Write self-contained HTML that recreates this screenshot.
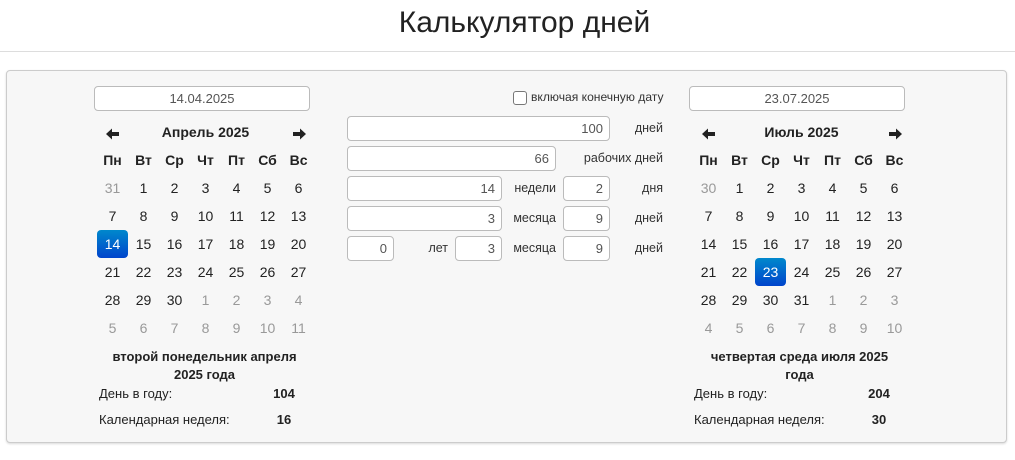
<!DOCTYPE html>
<html><head><meta charset="utf-8"><style>
*{box-sizing:border-box;margin:0;padding:0}
body{width:1015px;height:460px;background:#fff;font-family:"Liberation Sans",Arial,sans-serif;color:#222;position:relative;overflow:hidden;font-size:13px}
h1{position:absolute;top:6px;left:17px;width:1015px;text-align:center;font-weight:normal;font-size:30px;color:#222}
.hr{position:absolute;top:51px;left:0;width:1015px;height:1px;background:#ddd}
.panel{position:absolute;left:6px;top:70px;width:1001px;height:373px;background:#f7f7f7;border:1px solid #ccc;border-radius:4px;box-shadow:0 1px 2px rgba(0,0,0,.15)}
.in{position:absolute;height:25px;background:#fff;border:1px solid #bbb;border-radius:4px;font-size:13px;color:#555;line-height:23px;padding:0 6px;text-align:right}
.c{text-align:center}
.lbl{position:absolute;font-size:12.5px;color:#333;line-height:24px;text-align:right}
table.cal{position:absolute;border-collapse:collapse;top:118px;table-layout:fixed;width:217px}
.cal td{height:28px;text-align:center;font-size:14px;color:#222;padding:0;white-space:nowrap}
.cal th{height:28px;font-size:14px;font-weight:bold;text-align:center;padding:0;white-space:nowrap}
.cal th svg{vertical-align:-3px}
.cal .o{color:#999}
.cal .s{background:linear-gradient(#0088cc,#0044cc);color:#fff;border-radius:4px}
.t{position:absolute;font-size:13px;color:#222}
.b{font-weight:bold}
</style></head><body>
<h1>Калькулятор дней</h1>
<div class="hr"></div>
<div class="panel"></div>

<div class="in c" style="left:94px;top:86px;width:216px">14.04.2025</div>
<div class="in c" style="left:689px;top:86px;width:216px">23.07.2025</div>

<div style="position:absolute;left:513px;top:91px;width:14px;height:14px;border:1px solid #777;border-radius:3px;background:#fff"></div>
<div class="t" style="left:531px;top:90px;color:#333;font-size:12.1px">включая конечную дату</div>

<div class="in" style="left:347px;top:116px;width:263px">100</div><div class="lbl" style="left:600px;top:116px;width:63px">дней</div>
<div class="in" style="left:347px;top:146px;width:209px">66</div><div class="lbl" style="left:560px;top:146px;width:103px">рабочих дней</div>
<div class="in" style="left:347px;top:176px;width:155px">14</div><div class="lbl" style="left:505px;top:176px;width:51px">недели</div>
<div class="in" style="left:563px;top:176px;width:47px">2</div><div class="lbl" style="left:615px;top:176px;width:48px">дня</div>
<div class="in" style="left:347px;top:206px;width:155px">3</div><div class="lbl" style="left:505px;top:206px;width:51px">месяца</div>
<div class="in" style="left:563px;top:206px;width:47px">9</div><div class="lbl" style="left:615px;top:206px;width:48px">дней</div>
<div class="in" style="left:347px;top:236px;width:47px">0</div><div class="lbl" style="left:400px;top:236px;width:48px">лет</div>
<div class="in" style="left:455px;top:236px;width:47px">3</div><div class="lbl" style="left:505px;top:236px;width:51px">месяца</div>
<div class="in" style="left:563px;top:236px;width:47px">9</div><div class="lbl" style="left:615px;top:236px;width:48px">дней</div>

<table class="cal" style="left:97px">
<colgroup><col style="width:31px"><col style="width:31px"><col style="width:31px"><col style="width:31px"><col style="width:31px"><col style="width:31px"><col style="width:31px"></colgroup>
<tr><th><svg width="14" height="12" viewBox="0 0 14 12"><path d="M0 6L6 0.5V4H13V8H6V11.5Z" fill="#222"/></svg></th><th colspan="5">Апрель 2025</th><th><svg width="14" height="12" viewBox="0 0 14 12"><path d="M14 6L8 0.5V4H1V8H8V11.5Z" fill="#222"/></svg></th></tr>
<tr><th>Пн</th><th>Вт</th><th>Ср</th><th>Чт</th><th>Пт</th><th>Сб</th><th>Вс</th></tr>
<tr><td class="o">31</td><td>1</td><td>2</td><td>3</td><td>4</td><td>5</td><td>6</td></tr>
<tr><td>7</td><td>8</td><td>9</td><td>10</td><td>11</td><td>12</td><td>13</td></tr>
<tr><td class="s">14</td><td>15</td><td>16</td><td>17</td><td>18</td><td>19</td><td>20</td></tr>
<tr><td>21</td><td>22</td><td>23</td><td>24</td><td>25</td><td>26</td><td>27</td></tr>
<tr><td>28</td><td>29</td><td>30</td><td class="o">1</td><td class="o">2</td><td class="o">3</td><td class="o">4</td></tr>
<tr><td class="o">5</td><td class="o">6</td><td class="o">7</td><td class="o">8</td><td class="o">9</td><td class="o">10</td><td class="o">11</td></tr>
</table>

<table class="cal" style="left:693px">
<colgroup><col style="width:31px"><col style="width:31px"><col style="width:31px"><col style="width:31px"><col style="width:31px"><col style="width:31px"><col style="width:31px"></colgroup>
<tr><th><svg width="14" height="12" viewBox="0 0 14 12"><path d="M0 6L6 0.5V4H13V8H6V11.5Z" fill="#222"/></svg></th><th colspan="5">Июль 2025</th><th><svg width="14" height="12" viewBox="0 0 14 12"><path d="M14 6L8 0.5V4H1V8H8V11.5Z" fill="#222"/></svg></th></tr>
<tr><th>Пн</th><th>Вт</th><th>Ср</th><th>Чт</th><th>Пт</th><th>Сб</th><th>Вс</th></tr>
<tr><td class="o">30</td><td>1</td><td>2</td><td>3</td><td>4</td><td>5</td><td>6</td></tr>
<tr><td>7</td><td>8</td><td>9</td><td>10</td><td>11</td><td>12</td><td>13</td></tr>
<tr><td>14</td><td>15</td><td>16</td><td>17</td><td>18</td><td>19</td><td>20</td></tr>
<tr><td>21</td><td>22</td><td class="s">23</td><td>24</td><td>25</td><td>26</td><td>27</td></tr>
<tr><td>28</td><td>29</td><td>30</td><td>31</td><td class="o">1</td><td class="o">2</td><td class="o">3</td></tr>
<tr><td class="o">4</td><td class="o">5</td><td class="o">6</td><td class="o">7</td><td class="o">8</td><td class="o">9</td><td class="o">10</td></tr>
</table>

<div class="t b" style="left:96px;top:348px;width:217px;text-align:center;line-height:18px">второй понедельник апреля<br>2025 года</div>
<div class="t" style="left:99px;top:386px">День в году:</div><div class="t b" style="left:264px;top:386px;width:40px;text-align:center">104</div>
<div class="t" style="left:99px;top:412px">Календарная неделя:</div><div class="t b" style="left:264px;top:412px;width:40px;text-align:center">16</div>

<div class="t b" style="left:691px;top:348px;width:217px;text-align:center;line-height:18px">четвертая среда июля 2025<br>года</div>
<div class="t" style="left:694px;top:386px">День в году:</div><div class="t b" style="left:859px;top:386px;width:40px;text-align:center">204</div>
<div class="t" style="left:694px;top:412px">Календарная неделя:</div><div class="t b" style="left:859px;top:412px;width:40px;text-align:center">30</div>
</body></html>
